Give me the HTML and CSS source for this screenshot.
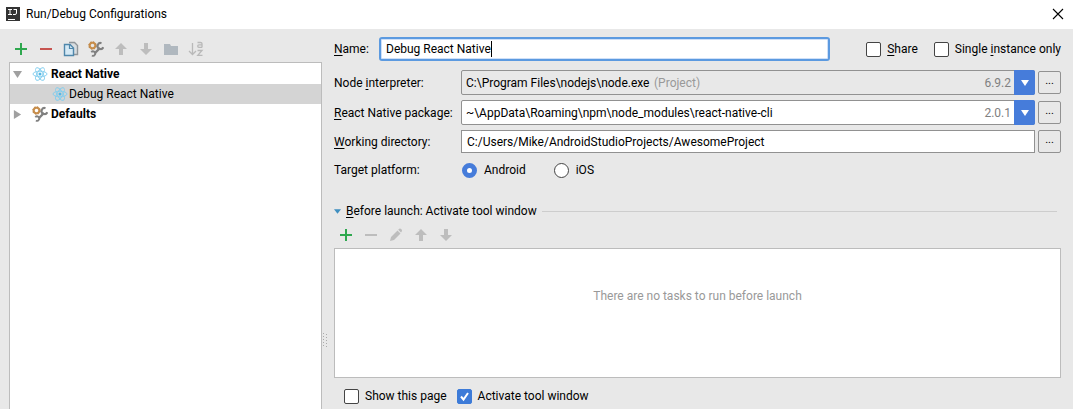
FILE: index.html
```html
<!DOCTYPE html>
<html lang="en">
<head>
<meta charset="utf-8">
<title>Run/Debug Configurations</title>
<link rel="stylesheet" href="styles.css">
</head>
<body>
<svg class="defs" width="0" height="0" aria-hidden="true">
  <symbol id="plus" viewBox="0 0 16 16"><path d="M8 2v12M2 8h12" stroke="#2fa84f" stroke-width="2"/></symbol>
  <symbol id="minus" viewBox="0 0 16 16"><path d="M2 8h12" stroke="currentColor" stroke-width="2"/></symbol>
  <symbol id="up" viewBox="0 0 16 16"><path d="M8 2l6 6h-4v6H6V8H2z" fill="#bdbdbd"/></symbol>
  <symbol id="down" viewBox="0 0 16 16"><path d="M8 14l6-6h-4V2H6v6H2z" fill="#bdbdbd"/></symbol>
  <symbol id="gear" viewBox="0 0 16 16">
    <circle cx="4.500" cy="4.500" r="2.800" fill="none" stroke="#c98f4c" stroke-width="2"/>
    <circle cx="4.500" cy="4.500" r="3.800" fill="none" stroke="#b98144" stroke-width="1" stroke-dasharray="1.500 1.480"/>
    <path d="M6.500 12.500l5.500-5.500" stroke="#808080" stroke-width="2.400"/>
    <path d="M13.500 2.200a3 3 0 1 0 1.800 4" fill="none" stroke="#808080" stroke-width="2.200"/>
    <path d="M3.300 11.200a2.200 2.200 0 1 1 .6 3.300" fill="none" stroke="#808080" stroke-width="1.800"/>
  </symbol>
  <symbol id="react" viewBox="0 0 16 16">
    <g fill="none" stroke="#82cdee" stroke-width=".9">
      <ellipse cx="8" cy="8" rx="7" ry="2.800"/>
      <ellipse cx="8" cy="8" rx="7" ry="2.800" transform="rotate(60 8 8)"/>
      <ellipse cx="8" cy="8" rx="7" ry="2.800" transform="rotate(120 8 8)"/>
    </g>
    <circle cx="8" cy="8" r="1.500" fill="#55b9e6"/>
  </symbol>
</svg>

<header class="titlebar">
  <svg class="logo" viewBox="0 0 14 14" aria-hidden="true"><path fill="#333" d="M0 0h14v14H0z"/><path d="M2 2.500h4M4 2v5M2 7.500h4M7.500 2.500H11M10.500 2v4q0 1.500-1.500 1.500H7M2 12.500h7" fill="none" stroke="#fff"/></svg>
  <h1 class="title">Run/Debug Configurations</h1>
  <button class="close" aria-label="Close"><svg viewBox="0 0 12 12"><path d="M1 1l10 10M11 1L1 11" stroke="#000" stroke-width="1.100"/></svg></button>
</header>

<main class="dialog">
  <aside class="sidebar">
    <div class="toolbar">
      <button class="tool" aria-label="Add"><svg><use href="#plus"/></svg></button>
      <button class="tool red" aria-label="Remove"><svg><use href="#minus"/></svg></button>
      <button class="tool" aria-label="Copy"><svg viewBox="0 0 16 16"><path d="M6 1.500h5.500L14.500 4.500v9H11" fill="#d8dde0" stroke="#8f9599" stroke-width="1.400"/><path d="M1.500 3.500H7L10.500 7v7.500h-9z" fill="#d5e9f5" stroke="#4f87ab" stroke-width="1.400"/><path d="M6.500 3.500V7.500h4" fill="none" stroke="#4f87ab" stroke-width="1.200"/></svg></button>
      <button class="tool" aria-label="Edit defaults"><svg><use href="#gear"/></svg></button>
      <button class="tool" aria-label="Move up"><svg><use href="#up"/></svg></button>
      <button class="tool" aria-label="Move down"><svg><use href="#down"/></svg></button>
      <button class="tool" aria-label="Create folder"><svg viewBox="0 0 16 16"><path d="M1 3h6l1 2h7v9H1z" fill="#b0b8bf"/></svg></button>
      <button class="tool" aria-label="Sort"><svg viewBox="0 0 16 16"><g fill="none" stroke="#b9b9b9" stroke-width="1.300"><path d="M4.500 2v12M1 10l3.500 3.500L8 10"/><path d="M9.500 1.500h3q1.500 0 1.500 1.200V6.500M14 3.800h-3q-1.300 0-1.300 1.200T11 6.300h3M9.500 9.500H14l-4.200 4.800h4.700"/></g></svg></button>
    </div>
    <ul class="tree">
      <li class="node"><svg class="arrow" viewBox="0 0 10 10"><path d="M0 1h10L5 9z" fill="#a0a0a0"/></svg><svg class="icon"><use href="#react"/></svg><b>React Native</b></li>
      <li class="node child selected"><svg class="icon"><use href="#react"/></svg>Debug React Native</li>
      <li class="node"><svg class="arrow" viewBox="0 0 10 10"><path d="M1 0v10l8-5z" fill="#a0a0a0"/></svg><svg class="icon"><use href="#gear"/></svg><b>Defaults</b></li>
    </ul>
  </aside>
  <div class="splitter" aria-hidden="true"><svg class="grip" viewBox="0 0 5 15"><path d="M1.500 0v15M4.500 1v14" stroke="#aaa" stroke-dasharray="1 2"/></svg></div>

  <form class="editor">
    <div class="name-row">
      <label class="name-label" for="name"><u>N</u>ame:</label>
      <div class="name-box"><input class="name" id="name" type="text" value="Debug React Native"></div>
      <label class="check share"><input type="checkbox"><span><u>S</u>hare</span></label>
      <label class="check"><input type="checkbox"><span>Single <u>i</u>nstance only</span></label>
    </div>
    <div class="fields">
      <label for="node">Node <u>i</u>nterpreter:</label>
      <div class="combo gray">
        <select id="node"><option>C:\Program Files\nodejs\node.exe</option></select>
        <span class="hint">(Project)</span><span class="version">6.9.2</span>
        <span class="drop"><svg viewBox="0 0 8 6"><path d="M0 0h8L4 6z" fill="#fff"/></svg></span>
      </div>
      <button type="button" class="browse" aria-label="Browse interpreter">...</button>

      <label for="package"><u>R</u>eact Native package:</label>
      <div class="combo">
        <select id="package"><option>~\AppData\Roaming\npm\node_modules\react-native-cli</option></select>
        <span class="version">2.0.1</span>
        <span class="drop"><svg viewBox="0 0 8 6"><path d="M0 0h8L4 6z" fill="#fff"/></svg></span>
      </div>
      <button type="button" class="browse" aria-label="Browse package">...</button>

      <label for="dir"><u>W</u>orking directory:</label>
      <input class="dir" id="dir" type="text" value="C:/Users/Mike/AndroidStudioProjects/AwesomeProject">
      <button type="button" class="browse" aria-label="Browse directory">...</button>

      <span id="platform">Target platform:</span>
      <div class="radios" role="radiogroup" aria-labelledby="platform">
        <label class="radio"><input type="radio" name="platform" checked>Android</label>
        <label class="radio"><input type="radio" name="platform">iOS</label>
      </div>
    </div>
    <h2 class="section"><svg class="fold" viewBox="0 0 8 5"><path d="M0 0h8L4 5z" fill="#3f8fc0"/></svg><span><u>B</u>efore launch: Activate tool window</span></h2>
    <div class="toolbar tasks-bar">
      <button type="button" class="tool" aria-label="Add task"><svg><use href="#plus"/></svg></button>
      <button type="button" class="tool dim" aria-label="Remove task"><svg><use href="#minus"/></svg></button>
      <button type="button" class="tool" aria-label="Edit task"><svg viewBox="0 0 16 16"><path d="M2 14l1-4 6.500-6.500 3 3L6 13zM10.200 2.800l1-1q1-.6 2 .2t.8 2l-1 1.500z" fill="#bdbdbd"/></svg></button>
      <button type="button" class="tool" aria-label="Move task up"><svg><use href="#up"/></svg></button>
      <button type="button" class="tool" aria-label="Move task down"><svg><use href="#down"/></svg></button>
    </div>
    <div class="tasks">There are no tasks to run before launch</div>
    <div class="options">
      <label class="check"><input type="checkbox"><span>Show this page</span></label>
      <label class="check"><input type="checkbox" checked><span>Activate tool window</span></label>
    </div>
  </form>
</main>
</body>
</html>
```
FILE: styles.css
```css
* { box-sizing: border-box; }
body {
  margin: 0;
  min-height: 100vh;
  display: flex;
  flex-direction: column;
  background: #e8e8e8;
  color: #000;
  font: 12px/16px Roboto, "Noto Sans", sans-serif;
}
button, input, select { font: inherit; color: inherit; margin: 0; }
button { padding: 0; border: 0; background: none; }
svg { display: block; flex: none; }
.defs { position: absolute; }
u { text-underline-offset: 2px; }

.titlebar { display: flex; align-items: center; height: 29px; padding: 0 9px 2px 6px; background: #fff; }
.logo { width: 14px; height: 14px; }
.title { margin: 0 auto 0 6px; font-size: 12px; font-weight: 400; }
.close svg { width: 12px; height: 12px; }

.dialog { flex: 1; display: grid; grid-template-columns: 322px 12px minmax(0, 1fr); }
.sidebar { display: flex; flex-direction: column; padding-left: 9px; }
.toolbar { display: flex; gap: 9px; padding: 12px 4px 5px; }
.tool, .tool svg { width: 16px; height: 16px; }
.red { color: #c75450; }
.dim { color: #bdbdbd; }
.tree { flex: 1; list-style: none; margin: 0; padding: 1px 0 0; background: #fff; border: solid #bcbcbc; border-width: 1px 1px 0; }
.node { display: flex; align-items: center; height: 20px; padding-left: 3px; }
.child { padding-left: 42px; }
.selected { background: #d4d4d4; }
.arrow { width: 9px; height: 9px; margin-right: 10px; }
.icon { width: 16px; height: 16px; margin-right: 3px; }
.child .icon { margin-right: 1px; }
.splitter { display: flex; align-items: flex-end; padding-bottom: 61px; }
.grip { width: 5px; height: 15px; }

.editor { display: flex; flex-direction: column; padding: 8px 12px 5px 0; }
.name-row { display: flex; align-items: center; }
.name-label { width: 45px; }
.name-box { position: relative; flex: 1; min-width: 0; }
/* text cursor after the name */
.name-box::after { content: ""; position: absolute; left: 112px; top: 4px; width: 1px; height: 16px; background: #000; }
.name-box:focus-within::after { display: none; }
.name { display: block; width: 100%; height: 24px; padding: 0 5px; background: #fff; border: 2px solid #5c9ae0; border-radius: 3px; outline: 0; box-shadow: inset 0 0 0 1px #cfe0f8; }
.check { display: flex; align-items: center; gap: 6px; white-space: nowrap; }
.share { margin: 0 16px 0 36px; }
.check input { appearance: none; width: 15px; height: 15px; background: #fff; border: 1px solid #444; border-radius: 2px; }
.check input:checked { border-color: #3d7bd8; background: #3d7bd8 url("data:image/svg+xml,%3Csvg xmlns='http://www.w3.org/2000/svg' viewBox='0 0 13 13'%3E%3Cpath d='M3 6.500l2.500 3L10 3' fill='none' stroke='white' stroke-width='2'/%3E%3C/svg%3E"); }

.fields { display: grid; grid-template-columns: 124px minmax(0, 1fr) 23px; column-gap: 3px; row-gap: 5px; align-items: center; margin-top: 9px; white-space: nowrap; }
.combo { display: flex; align-items: center; height: 25px; background: #fff; border: 1px solid #919191; border-radius: 2px; }
.gray { background: #e8e8e8; }
.combo select { appearance: none; padding: 0 0 0 4px; border: 0; background: none; }
.hint { margin-left: 4px; color: #999; }
.version { margin-left: auto; margin-right: 3px; color: #808080; }
.drop { display: grid; place-items: center; width: 21px; height: 25px; margin-right: -1px; background: #467cda; border-radius: 0 2px 2px 0; }
.drop svg { width: 8px; height: 6px; }
.browse { height: 23px; padding-bottom: 4px; border: 1px solid #919191; border-radius: 2px; font-size: 11px; line-height: 12px; }
.dir { width: 100%; height: 23px; padding: 0 5px; background: #fff; border: 1px solid #919191; outline: 0; }
.radios { display: flex; gap: 28px; padding: 4px 1px; }
.radio { display: flex; align-items: center; gap: 7px; }
.radio input { appearance: none; width: 15px; height: 15px; background: #fff; border: 1px solid #444; border-radius: 50%; }
.radio input:checked { border: 5px solid #467cda; }

.section { display: flex; align-items: center; gap: 5px; margin: 21px 4px 0 0; font-size: 12px; font-weight: 400; }
.section::after { content: ""; flex: 1; height: 1px; background: #cdcdcd; }
.fold { width: 7px; height: 5px; }
.tasks-bar { padding: 8px 4px 5px; }
.tasks { flex: 1; display: grid; place-items: center; min-height: 60px; padding-bottom: 34px; background: #fff; border: 1px solid #bcbcbc; color: #999; }
.options { display: flex; gap: 10px; padding: 10px 10px 0; }
```
